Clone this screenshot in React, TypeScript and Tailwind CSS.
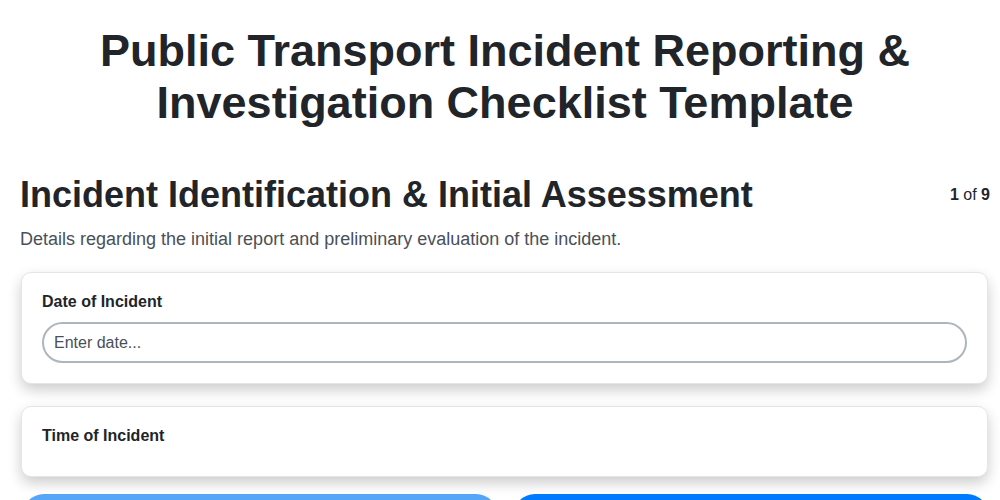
import React from "react";

export default function App() {
  return (
    <div className="min-h-screen bg-white text-[#212529]" style={{ fontFamily: '"Liberation Sans", Arial, sans-serif' }}>
      <div className="pl-[20px] pr-[10px]">
        <h1 className="pt-[25px] text-center text-[45px] font-bold leading-[52px]">
          Public Transport Incident Reporting &amp;
          <br />
          Investigation Checklist Template
        </h1>
        <div className="mt-[44px] flex items-start justify-between">
          <h2 className="text-[36px] font-bold leading-[44px]">Incident Identification &amp; Initial Assessment</h2>
          <div className="mt-[10px] text-[16px]">
            <span className="font-bold">1</span> of <span className="font-bold">9</span>
          </div>
        </div>
        <p className="mt-[10px] text-[18px] leading-[24px] text-[#495057]">
          Details regarding the initial report and preliminary evaluation of the incident.
        </p>
        <div className="mx-[1px] mt-[21px] flex flex-col gap-[22px] pr-[1px]">
          <div className="rounded-[10px] border border-[#e4e4ec] bg-white px-[20px] pb-[20px] pt-[19px] shadow-[0_6px_14px_rgba(0,0,0,0.2)]">
            <label className="block text-[16px] font-bold leading-[20px]">Date of Incident</label>
            <input
              className="mt-[10px] h-[41px] w-full rounded-full border-2 border-[#adb5bd] bg-white px-[10px] text-[16px] text-[#212529] outline-none placeholder:text-[#495057]"
              placeholder="Enter date..."
            />
          </div>
          <div className="h-[71px] rounded-[10px] border border-[#e4e4ec] bg-white px-[20px] pt-[19px] shadow-[0_6px_14px_rgba(0,0,0,0.2)]">
            <label className="block text-[16px] font-bold leading-[20px]">Time of Incident</label>
          </div>
        </div>
        <div className="mt-[17px] flex gap-[15px] pl-[2px] pr-[1px]">
          <button className="h-[44px] flex-1 rounded-full bg-[#55a5f9] text-white">Previous</button>
          <button className="h-[44px] flex-1 rounded-full bg-[#007bff] text-white">Next</button>
        </div>
      </div>
    </div>
  );
}
